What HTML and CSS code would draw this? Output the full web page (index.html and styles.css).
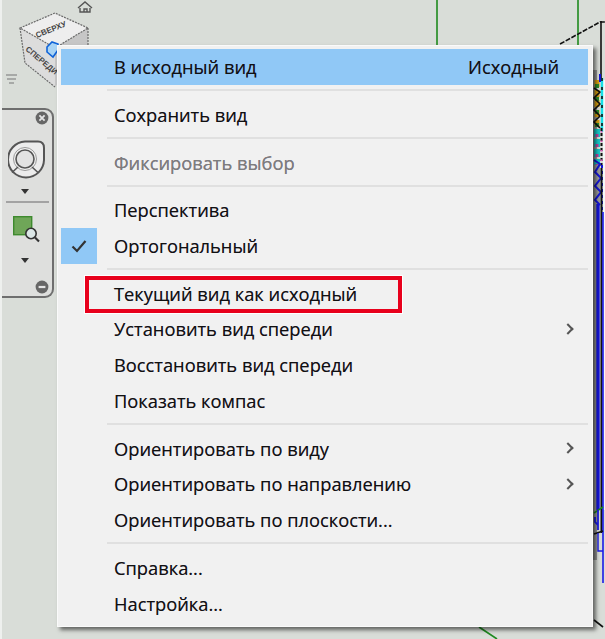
FILE: index.html
```html
<!DOCTYPE html>
<html lang="ru">
<head>
<meta charset="utf-8">
<title>ViewCube</title>
<link rel="stylesheet" href="styles.css">
</head>
<body>
<main class="viewport">
  <svg class="scene" width="605" height="639" viewBox="0 0 605 639" aria-hidden="true">
    <rect x="593" y="70" width="4" height="490" fill="#9a9a9a"/>
    <rect x="603" y="80" width="2" height="430" fill="#f4f8f8"/>
    <g fill="none" stroke-width="1.6">
      <path d="M437 0V46M578 0V46M479 627l18 12" stroke="#1f8a1f"/>
      <path d="M560 44 600 22H605" stroke="#111" stroke-dasharray="5 1.5"/>
      <path d="M601 21V78" stroke="#111"/>
      <!-- colour band, top -->
      <path d="M597 80V128" stroke="#d8a010" stroke-width="5" stroke-dasharray="7 3"/>
      <path d="M597 84V128" stroke="#2a8a2a" stroke-width="4" stroke-dasharray="4 9"/>
      <path d="M594 88 600 92 594 98 600 104 594 110 600 116 594 122 600 128" stroke="#111"/>
      <path d="M602 78V132" stroke="#18e0e8" stroke-width="2.4"/>
      <path d="M602 78V132" stroke="#111" stroke-width="1.6" stroke-dasharray="3 6"/>
      <path d="M600 74V82" stroke="#1414d8" stroke-width="2"/>
      <!-- colour band, middle -->
      <path d="M597 129V165" stroke="#18c8c8" stroke-width="6" stroke-dasharray="8 2"/>
      <path d="M597 134V165" stroke="#c040a0" stroke-width="3" stroke-dasharray="3 7"/>
      <path d="M601.5 128V168" stroke="#111" stroke-width="2" stroke-dasharray="3 2"/>
      <path d="M601.5 131V168" stroke="#e060c0" stroke-width="2" stroke-dasharray="1.5 8"/>
      <!-- colour band, lower -->
      <path d="M597 165V205" stroke="#9a9a9a" stroke-width="6"/>
      <path d="M594 160 600 164 595 172 601 178 595 186 601 192 595 200 600 205" stroke="#1414d8" stroke-width="2"/>
      <path d="M602 165V212" stroke="#1414d8" stroke-width="2" stroke-dasharray="3 3"/>
      <!-- solid run -->
      <path d="M598 204V510" stroke="#1414d8" stroke-width="3.4"/>
      <path d="M601.5 168V533" stroke="#111" stroke-width="2"/>
      <path d="M603 212V583" stroke="#1a1ae8" stroke-width="1.6"/>
      <path d="M594 513 603 507" stroke="#1f8a1f"/>
      <path d="M595 517V522L598 525M598 510V530" stroke="#1a1ae8" stroke-width="1.8"/>
      <path d="M594 534 603 531" stroke="#111"/>
      <path d="M598 533V551H603" stroke="#1a1ae8" stroke-width="1.4"/>
      <path d="M594 620 603 627" stroke="#111"/>
    </g>
    <g class="home" fill="none" stroke="#555" stroke-width="1.4">
      <path d="M78 8 85 2 92 8"/>
      <path d="M80 8V12H90V8M84 12V9H87V12"/>
    </g>
    <g class="cube">
      <path d="M20 28 55 13 88 28 55 48Z" fill="#eeeeee"/>
      <path d="M20 28 55 48V87L25 63Z" fill="#dcdcdc"/>
      <path d="M55 48 88 28V50L55 87Z" fill="#c6c6c6"/>
      <path d="M20 28 55 13 88 28 55 48ZM20 28 25 63 55 87M88 28V48" fill="none" stroke="#6a6a6a" stroke-width="1.2" stroke-dasharray="2 1"/>
      <text class="cube-label" transform="translate(37 38) rotate(-22)">СВЕРХУ</text>
      <text class="cube-label" transform="translate(25 50) rotate(40)">СПЕРЕДИ</text>
      <path d="M47 47 52 42 58 44V50L53 57 47 52Z" fill="#a9d4f5" stroke="#0f63d8" stroke-width="1.6"/>
    </g>
    <g fill="none" stroke="#777" stroke-width="1.2">
      <path d="M6 75H17M7 79H16M9 83H14"/>
    </g>
  </svg>

  <aside class="nav-bar">
    <svg class="nav-close" width="14" height="14" viewBox="0 0 14 14" aria-hidden="true">
      <circle cx="7" cy="7" r="6.4" fill="#666"/>
      <path d="M4.4 4.4 9.6 9.6M9.6 4.4 4.4 9.6" stroke="#e4e4e4" stroke-width="1.8"/>
    </svg>
    <svg class="wheel" width="38" height="40" viewBox="0 0 38 40" aria-hidden="true">
      <path d="M17 1.5H30Q36 1.5 36 8V20A18 18 0 1 1 17 1.5Z" fill="#ececec" stroke="#555" stroke-width="2"/>
      <circle cx="17" cy="19" r="11.5" fill="#f2f2f2" stroke="#999" stroke-width="1"/>
      <circle cx="17" cy="19" r="9" fill="#e2e2e2" stroke="#555" stroke-width="1.6"/>
      <path d="M10 27 4 32.5M24 27 30 32.5" stroke="#555" stroke-width="1.6"/>
    </svg>
    <span class="tri"></span>
    <span class="nav-rule"></span>
    <svg class="zoom-ico" width="28" height="28" viewBox="0 0 28 28" aria-hidden="true">
      <rect x="0.7" y="0.7" width="18" height="18" fill="#6fa658" stroke="#3e8a2e" stroke-width="1.4"/>
      <circle cx="18" cy="17.5" r="5.2" fill="#dbe6e6" stroke="#333" stroke-width="1.6"/>
      <path d="M22 21.5 26 25.5" stroke="#333" stroke-width="2.2"/>
    </svg>
    <span class="tri tri-low"></span>
    <svg class="nav-collapse" width="14" height="14" viewBox="0 0 14 14" aria-hidden="true">
      <circle cx="7" cy="7" r="6.4" fill="#666"/>
      <path d="M3.6 7H10.4" stroke="#e4e4e4" stroke-width="2.2"/>
    </svg>
  </aside>

  <nav class="menu">
    <div class="row row-hl"><span>В исходный вид</span><span class="hint">Исходный</span></div>
    <div class="sep"></div>
    <div class="row"><span>Сохранить вид</span></div>
    <div class="sep"></div>
    <div class="row row-off"><span>Фиксировать выбор</span></div>
    <div class="sep"></div>
    <div class="row"><span>Перспектива</span></div>
    <div class="row">
      <span class="check">
        <svg width="16" height="14" viewBox="0 0 16 14" aria-hidden="true"><path d="M1.5 7.5 6 12 14.5 2" fill="none" stroke="#333" stroke-width="2.2"/></svg>
      </span>
      <span>Ортогональный</span>
    </div>
    <div class="sep"></div>
    <div class="row"><span class="mark"></span><span>Текущий вид как исходный</span></div>
    <div class="row"><span>Установить вид спереди</span><i class="chev"></i></div>
    <div class="row"><span>Восстановить вид спереди</span></div>
    <div class="row"><span>Показать компас</span></div>
    <div class="sep"></div>
    <div class="row"><span>Ориентировать по виду</span><i class="chev"></i></div>
    <div class="row"><span>Ориентировать по направлению</span><i class="chev"></i></div>
    <div class="row"><span>Ориентировать по плоскости...</span></div>
    <div class="sep"></div>
    <div class="row"><span>Справка...</span></div>
    <div class="row"><span>Настройка...</span></div>
  </nav>
</main>
</body>
</html>
```
FILE: styles.css
```css
* { box-sizing: border-box; }
html, body { margin: 0; padding: 0; }
body { background: #d9ddd8; font-family: "Open Sans", "Noto Sans", "Liberation Sans", sans-serif; overflow: hidden; }

.viewport {
  position: relative;
  width: 605px;
  height: 639px;
  overflow: hidden;
  background: #d9ddd8;
  border-left: 2px solid #eef0ee;
}
.scene { position: absolute; left: -2px; top: 0; }
.cube-label { font: bold 8px "Liberation Sans", sans-serif; fill: #444; }

.nav-bar {
  position: absolute;
  left: 0;
  top: 108px;
  width: 52px;
  height: 190px;
  display: flex;
  flex-direction: column;
  align-items: center;
  background: #dedfdd;
  border: 2px solid #6e6e6e;
  border-left: 0;
  border-radius: 0 9px 9px 0;
  padding-top: 30px;
}
.nav-close { position: absolute; right: 3px; top: 1px; }
.nav-collapse { position: absolute; right: 3px; bottom: 2px; }
.tri {
  width: 0; height: 0;
  margin: 9px 4px 0 0;
  border: 4.5px solid transparent;
  border-top: 5px solid #333;
  border-bottom: 0;
}
.nav-rule { width: 43px; height: 2px; background: #a3a3a3; margin-top: 7px; }
.zoom-ico { margin-top: 13px; }
.tri-low { margin-top: 14px; }

.menu {
  position: absolute;
  left: 55px;
  top: 45px;
  width: 536px;
  height: 582px;
  padding: 3px 4px 4px 3px;
  background: #f1f1f1;
  border: 1px solid #fafafa;
  box-shadow: 3px 3px 4px rgba(0, 0, 0, .55);
  display: flex;
  flex-direction: column;
  color: #111;
  font-size: 18.3px;
  text-shadow: 0 0 .5px rgba(30, 0, 60, .5);
}
.row {
  position: relative;
  flex: 0 0 35.8px;
  display: flex;
  align-items: center;
  justify-content: space-between;
  padding: 0 20px 0 53px;
  white-space: nowrap;
}
.row-hl { background: #90c8f6; padding-right: 29px; }
.row-off { color: #7d7d7d; }
.sep { flex: 0 0 11.8px; padding-top: 4.6px; margin-left: 46px; }
.sep::before { content: ""; display: block; height: 2px; background: #e0e0e0; }
.check {
  position: absolute;
  left: 0;
  top: 0;
  width: 36px;
  height: 36px;
  background: #90c8f6;
  display: flex;
  align-items: center;
  justify-content: center;
}
.mark {
  position: absolute;
  left: 24px;
  top: 1px;
  width: 317px;
  height: 37px;
  border: 4px solid #e8001c;
  outline: 1px solid #fff;
}
.chev {
  width: 8px;
  height: 8px;
  border-top: 2px solid #555;
  border-right: 2px solid #555;
  transform: rotate(45deg);
  margin-right: -4px;
}
```
